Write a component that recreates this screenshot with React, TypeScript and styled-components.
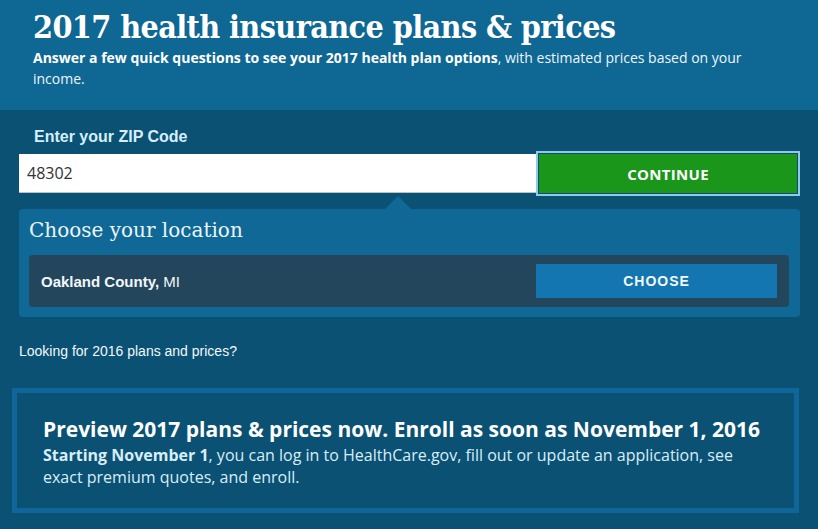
import React from "react";
import styled, { createGlobalStyle } from "styled-components";

const Global = createGlobalStyle`
  html, body { margin: 0; padding: 0; background: #0a5173; }
  body { width: 818px; height: 529px; overflow: hidden; }
`;

const Page = styled.div`
  width: 818px;
  height: 529px;
  background: #0a5173;
  display: flex;
  flex-direction: column;
`;

const Header = styled.header`
  background: #0f6794;
  height: 110px;
  box-sizing: border-box;
  padding: 7px 60px 0 33px;
`;

const Title = styled.h1`
  margin: 0;
  font-family: "DejaVu Serif Condensed", "DejaVu Serif", serif;
  font-stretch: condensed;
  font-weight: 700;
  font-size: 32px;
  line-height: 40px;
  letter-spacing: -0.6px;
  color: #ffffff;
`;

const Lead = styled.p`
  margin: 0;
  font-family: "Open Sans", sans-serif;
  font-stretch: 90%;
  font-size: 14px;
  line-height: 21px;
  color: #eef6fb;
  b { font-weight: 700; color: #fff; }
`;

const Main = styled.main`
  padding: 17px 18px 0 19px;
  display: flex;
  flex-direction: column;
`;

const Label = styled.label`
  font-family: "Liberation Sans", Arial, sans-serif;
  font-weight: 700;
  font-size: 16px;
  color: #d6eefa;
  margin-left: 15px;
  line-height: 20px;
`;

const ZipRow = styled.div`
  display: flex;
  align-items: center;
  margin-top: 4px;
`;

const ZipInput = styled.div`
  flex: 1;
  height: 39px;
  box-sizing: border-box;
  background: #fff;
  border-bottom: 1px solid #b7c2c9;
  display: flex;
  align-items: center;
  padding-left: 8px;
  font-family: "Open Sans", sans-serif;
  font-size: 16px;
  color: #333;
`;

const ContinueBtn = styled.button`
  width: 264px;
  height: 45px;
  box-sizing: border-box;
  background: #1a961a;
  border: 2px solid #8fc9ee;
  box-shadow: inset 0 0 0 1px #0b4f6b;
  color: #fff;
  font-family: "Open Sans", sans-serif;
  font-weight: 700;
  font-size: 15px;
  letter-spacing: 0.3px;
  padding: 0;
`;

const Panel = styled.section`
  position: relative;
  margin-top: 13px;
  background: #0f6896;
  border-radius: 4px;
  padding: 7px 11px 10px 10px;
  &::before {
    content: "";
    position: absolute;
    top: -13px;
    left: 366px;
    border-left: 13px solid transparent;
    border-right: 13px solid transparent;
    border-bottom: 13px solid #0f6896;
  }
`;

const PanelTitle = styled.h2`
  margin: 0;
  font-family: "DejaVu Serif", serif;
  font-weight: 400;
  font-size: 20px;
  line-height: 28px;
  color: #eaf5fb;
`;

const LocationRow = styled.div`
  margin-top: 11px;
  background: #23465d;
  border-radius: 4px;
  height: 52px;
  display: flex;
  align-items: center;
  justify-content: space-between;
  padding: 0 12px 0 12px;
`;

const Place = styled.span`
  font-family: "Liberation Sans", Arial, sans-serif;
  font-size: 15px;
  color: #f2f7fa;
  b { font-weight: 700; }
`;

const ChooseBtn = styled.button`
  width: 241px;
  height: 34px;
  background: #1476b0;
  border: none;
  color: #f4f9fc;
  font-family: "Liberation Sans", Arial, sans-serif;
  font-weight: 700;
  font-size: 14px;
  letter-spacing: 1px;
  padding: 0;
`;

const OldLink = styled.a`
  margin-top: 26px;
  font-family: "Liberation Sans", Arial, sans-serif;
  font-size: 14px;
  color: #f2f8fb;
  text-decoration: none;
`;

const Notice = styled.section`
  margin: 29px 19px 0 12px;
  border: 5px solid #10669a;
  height: 125px;
  box-sizing: border-box;
  padding: 21px 26px 0 26px;
`;

const NoticeTitle = styled.h3`
  margin: 0;
  font-family: "Open Sans", sans-serif;
  font-stretch: 93%;
  font-weight: 700;
  font-size: 21px;
  line-height: 30px;
  color: #ffffff;
`;

const NoticeText = styled.p`
  margin: 0;
  font-family: "Open Sans", sans-serif;
  font-stretch: 90%;
  font-size: 16px;
  line-height: 22px;
  color: #d9edf8;
  b { font-weight: 700; }
`;

export default function App() {
  return (
    <Page>
      <Global />
      <Header>
        <Title>2017 health insurance plans &amp; prices</Title>
        <Lead>
          <b>Answer a few quick questions to see your 2017 health plan options</b>, with estimated prices based on your income.
        </Lead>
      </Header>
      <Main>
        <Label>Enter your ZIP Code</Label>
        <ZipRow>
          <ZipInput>48302</ZipInput>
          <ContinueBtn>CONTINUE</ContinueBtn>
        </ZipRow>
        <Panel>
          <PanelTitle>Choose your location</PanelTitle>
          <LocationRow>
            <Place><b>Oakland County,</b> MI</Place>
            <ChooseBtn>CHOOSE</ChooseBtn>
          </LocationRow>
        </Panel>
        <OldLink>Looking for 2016 plans and prices?</OldLink>
      </Main>
      <Notice>
        <NoticeTitle>Preview 2017 plans &amp; prices now. Enroll as soon as November 1, 2016</NoticeTitle>
        <NoticeText>
          <b>Starting November 1</b>, you can log in to HealthCare.gov, fill out or update an application, see exact premium quotes, and enroll.
        </NoticeText>
      </Notice>
    </Page>
  );
}
